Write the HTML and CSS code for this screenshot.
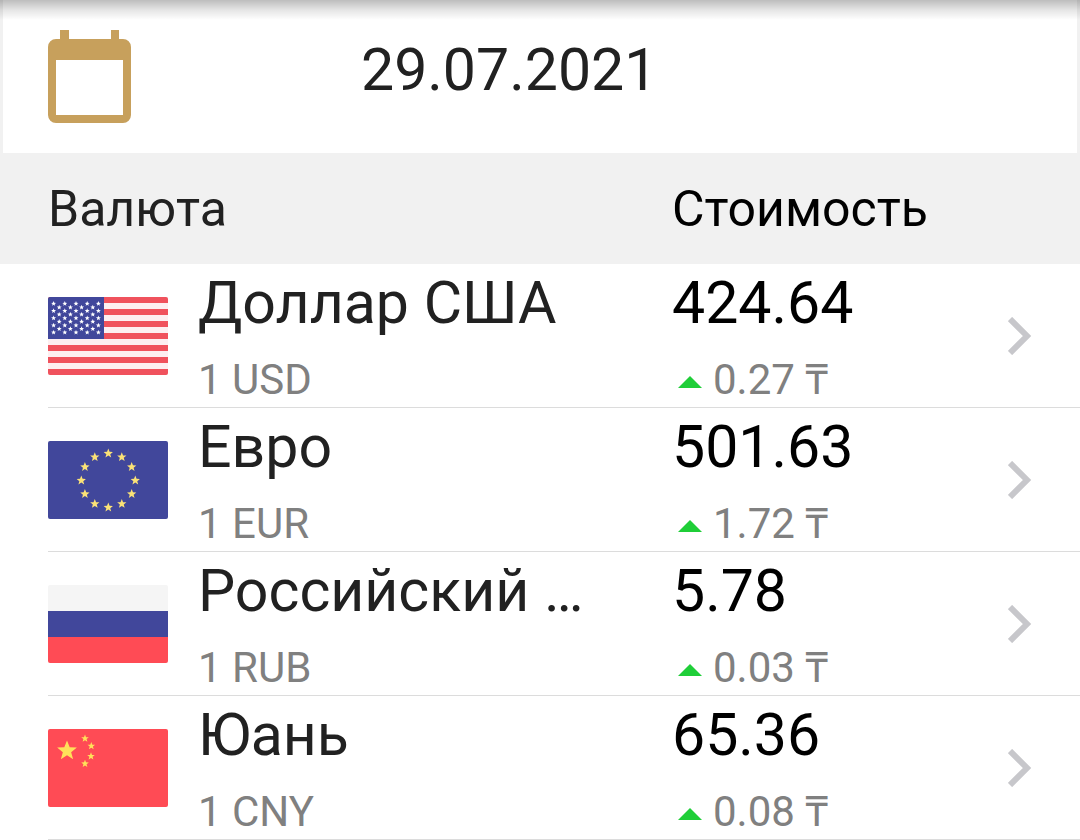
FILE: index.html
```html
<!DOCTYPE html>
<html lang="ru">
<head>
    <meta charset="UTF-8">
    <meta name="viewport" content="width=device-width, initial-scale=1">
    <title>Курсы валют</title>
    <link rel="stylesheet" href="styles.css">
</head>
<body>
    <svg class="sprite" aria-hidden="true">
        <symbol id="star" viewBox="-10 -10 20 20" overflow="visible">
            <path d="M0-10 2.6-3.4 9.5-3.1 4 1.4 5.9 8.1 0 4.3-5.9 8.1-4 1.4-9.5-3.1-2.6-3.4Z"/>
        </symbol>
        <symbol id="chevron" viewBox="0 0 24 38">
            <path d="M2 2 19 19 2 36" fill="none" stroke="#c7c7cb" stroke-width="6"/>
        </symbol>
        <symbol id="up" viewBox="0 0 24 16">
            <path d="M12 4 24 16H0Z" fill="#1fce38"/>
        </symbol>
    </svg>

    <div class="date-bar">
        <label for="date" aria-label="Дата">
            <svg class="calendar" viewBox="0 0 84 93">
                <path fill="#c7a05c" fill-rule="evenodd" d="M12 0h9v9h42V0h8v9h4a8 8 0 0 1 8 8v68a8 8 0 0 1-8 8H8a8 8 0 0 1-8-8V17a8 8 0 0 1 8-8h4ZM8 30v55h67V30Z"/>
            </svg>
        </label>
        <input type="text" id="date" value="29.07.2021">
    </div>

    <table class="rates">
        <thead>
            <tr>
                <th class="currency" colspan="2">Валюта</th>
                <th class="cost">Стоимость</th>
            </tr>
        </thead>
        <tbody>
            <tr>
                <td>
                    <svg class="flag" viewBox="0 0 120 78">
                        <path fill="#fdeff1" d="M0 0h120v78H0Z"/>
                        <path fill="#f0525d" d="M0 0h120v6H0ZM0 12h120v6H0ZM0 24h120v6H0ZM0 36h120v6H0ZM0 48h120v6H0ZM0 60h120v6H0ZM0 72h120v6H0Z"/>
                        <path fill="#41479b" d="M0 0h56v42H0Z"/>
                        <g id="us-stars" fill="#fff"></g>
                    </svg>
                </td>
                <td>
                    <div class="name">Доллар США</div>
                    <div class="sub">1 USD</div>
                </td>
                <td>
                    <div class="value">424.64</div>
                    <div class="sub change"><svg class="up"><use href="#up"/></svg>0.27 ₸</div>
                </td>
                <td><a class="more" href="#usd" aria-label="USD"><svg><use href="#chevron"/></svg></a></td>
            </tr>
            <tr>
                <td>
                    <svg class="flag" viewBox="0 0 120 78">
                        <path fill="#41479b" d="M0 0h120v78H0Z"/>
                        <g id="eu-stars" fill="#fbe277"></g>
                    </svg>
                </td>
                <td>
                    <div class="name">Евро</div>
                    <div class="sub">1 EUR</div>
                </td>
                <td>
                    <div class="value">501.63</div>
                    <div class="sub change"><svg class="up"><use href="#up"/></svg>1.72 ₸</div>
                </td>
                <td><a class="more" href="#eur" aria-label="EUR"><svg><use href="#chevron"/></svg></a></td>
            </tr>
            <tr>
                <td>
                    <svg class="flag" viewBox="0 0 120 78">
                        <path fill="#f5f5f5" d="M0 0h120v26H0Z"/>
                        <path fill="#41479b" d="M0 26h120v26H0Z"/>
                        <path fill="#ff4b55" d="M0 52h120v26H0Z"/>
                    </svg>
                </td>
                <td>
                    <div class="name">Российский …</div>
                    <div class="sub">1 RUB</div>
                </td>
                <td>
                    <div class="value">5.78</div>
                    <div class="sub change"><svg class="up"><use href="#up"/></svg>0.03 ₸</div>
                </td>
                <td><a class="more" href="#rub" aria-label="RUB"><svg><use href="#chevron"/></svg></a></td>
            </tr>
            <tr>
                <td>
                    <svg class="flag" viewBox="0 0 120 78">
                        <path fill="#ff4b55" d="M0 0h120v78H0Z"/>
                        <g id="cn-stars" fill="#ffe15a"></g>
                    </svg>
                </td>
                <td>
                    <div class="name">Юань</div>
                    <div class="sub">1 CNY</div>
                </td>
                <td>
                    <div class="value">65.36</div>
                    <div class="sub change"><svg class="up"><use href="#up"/></svg>0.08 ₸</div>
                </td>
                <td><a class="more" href="#cny" aria-label="CNY"><svg><use href="#chevron"/></svg></a></td>
            </tr>
        </tbody>
    </table>

    <script src="flags.js"></script>
</body>
</html>
```
FILE: styles.css
```css
* { box-sizing: border-box; }
body { margin: 0; background: #fff; color: #212121; font-family: Roboto, "Noto Sans", sans-serif; }
.sprite { display: none; }
svg { display: block; }

/* date */
.date-bar {
    position: relative;
    display: grid;
    grid-template-columns: 1fr 2fr;
    align-items: start;
    padding: 30px 0;
    border: solid #f1f1f1;
    border-width: 0 3px;
}
.date-bar::before {
    content: "";
    position: absolute;
    top: 0;
    left: -3px;
    right: -3px;
    height: 20px;
    background: linear-gradient(rgba(0,0,0,0.26), rgba(0,0,0,0.1) 50%, rgba(0,0,0,0));
}
.date-bar label { padding-left: 45px; }
.calendar { width: 84px; height: 93px; }
.date-bar input {
    width: 100%;
    height: 78px;
    padding: 0;
    border: none;
    outline: none;
    background: none;
    color: inherit;
    font: inherit;
    font-size: 59px;
}

/* rates */
.rates, .rates thead, .rates tbody { display: block; }
.rates tr {
    display: grid;
    grid-template-columns: 150px 79fr 56fr 72px;
    align-items: center;
}
.rates th, .rates td { padding: 0; text-align: left; }
.rates thead tr { padding: 2px 0 0 48px; background: #f1f1f1; }
.rates th { font-size: 50px; font-weight: normal; line-height: 109px; }
.currency { grid-column: span 2; }
.cost { color: #000; }
.rates tbody tr { margin-left: 48px; border-bottom: 1px solid #dcdcdc; }
.flag { width: 120px; height: 78px; border-radius: 2px; overflow: hidden; }
.name, .value { padding-top: 7px; font-size: 59px; line-height: 64px; white-space: nowrap; }
.value { color: #000; }
.sub { padding: 19px 0 1px; font-size: 42px; line-height: 52px; color: #808080; white-space: nowrap; }
.change { display: flex; align-items: center; gap: 11px; padding-left: 6px; }
.up { width: 24px; height: 16px; }
.more { display: block; }
.more svg { width: 24px; height: 38px; }
```
FILE: flags.js
```js
function addStars(id, stars) {
    const group = document.getElementById(id);
    stars.forEach(([x, y, r]) => {
        const star = document.createElementNS('http://www.w3.org/2000/svg', 'use');
        star.setAttribute('href', '#star');
        star.setAttribute('x', x - r);
        star.setAttribute('y', y - r);
        star.setAttribute('width', r * 2);
        star.setAttribute('height', r * 2);
        group.appendChild(star);
    });
}

// 9 rows, 5 and 4 stars by turns
const us = [];
for (let row = 0; row < 9; row++) {
    const count = row % 2 ? 4 : 5;
    for (let i = 0; i < count; i++) {
        us.push([(row % 2 ? 11.2 : 5.6) + i * 11.2, 6.7 + row * 3.6, 2.6]);
    }
}
addStars('us-stars', us);

const eu = [];
for (let i = 0; i < 12; i++) {
    const a = i * Math.PI / 6;
    eu.push([60.3 + 27 * Math.sin(a), 39.5 - 27 * Math.cos(a), 4.9]);
}
addStars('eu-stars', eu);

addStars('cn-stars', [[19, 21.8, 10.4], [37, 9.5, 4], [43.3, 17, 4], [43, 27.3, 4], [37, 34.7, 4]]);
```
